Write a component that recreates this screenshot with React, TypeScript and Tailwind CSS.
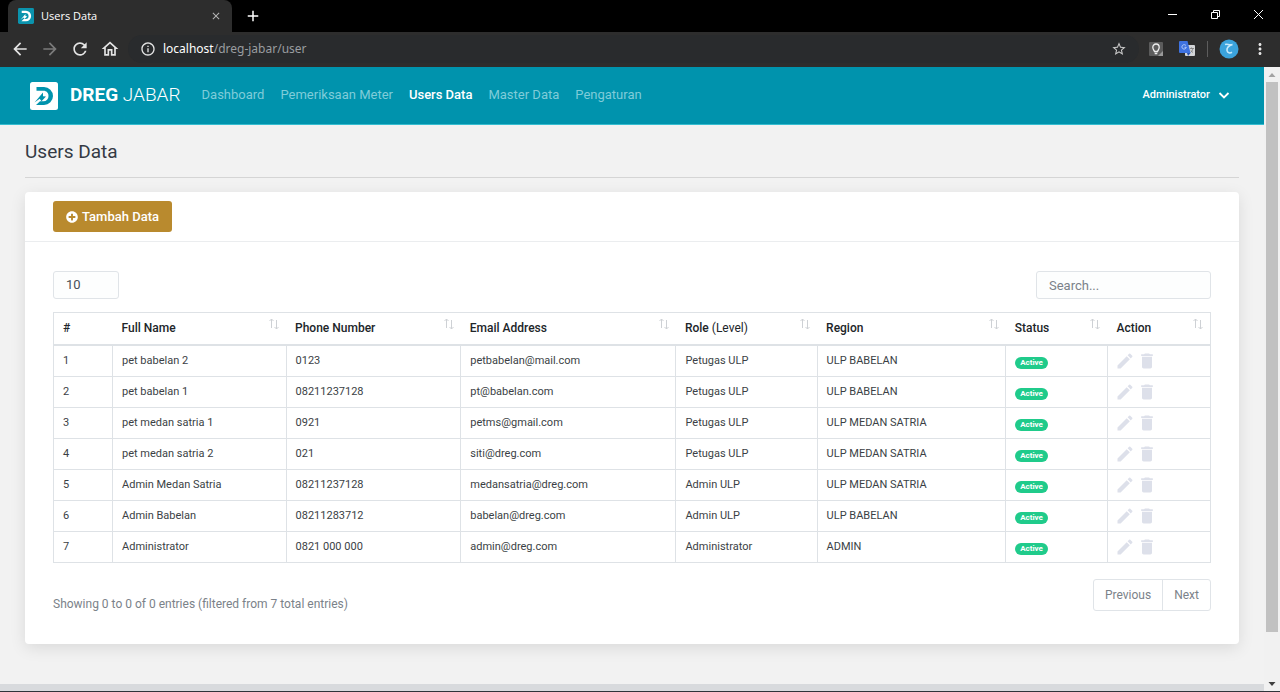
import type { ReactNode } from 'react';
import { FaPlusCircle } from 'react-icons/fa';
import {
  MdAdd,
  MdArrowBack,
  MdArrowForward,
  MdClose,
  MdDelete,
  MdEdit,
  MdInfoOutline,
  MdMoreVert,
  MdOutlineHome,
  MdRefresh,
  MdStarBorder,
} from 'react-icons/md';

interface User {
  name: string;
  phone: string;
  email: string;
  role: string;
  region: string;
}

const users: User[] = [
  { name: 'pet babelan 2', phone: '0123', email: 'petbabelan@mail.com', role: 'Petugas ULP', region: 'ULP BABELAN' },
  { name: 'pet babelan 1', phone: '08211237128', email: 'pt@babelan.com', role: 'Petugas ULP', region: 'ULP BABELAN' },
  { name: 'pet medan satria 1', phone: '0921', email: 'petms@gmail.com', role: 'Petugas ULP', region: 'ULP MEDAN SATRIA' },
  { name: 'pet medan satria 2', phone: '021', email: 'siti@dreg.com', role: 'Petugas ULP', region: 'ULP MEDAN SATRIA' },
  { name: 'Admin Medan Satria', phone: '08211237128', email: 'medansatria@dreg.com', role: 'Admin ULP', region: 'ULP MEDAN SATRIA' },
  { name: 'Admin Babelan', phone: '08211283712', email: 'babelan@dreg.com', role: 'Admin ULP', region: 'ULP BABELAN' },
  { name: 'Administrator', phone: '0821 000 000', email: 'admin@dreg.com', role: 'Administrator', region: 'ADMIN' },
];

const navItems = ['Dashboard', 'Pemeriksaan Meter', 'Users Data', 'Master Data', 'Pengaturan'];

const columns: { label: ReactNode; key: string; width: string; sortable: boolean }[] = [
  { key: 'no', label: '#', width: 'w-[5.1%]', sortable: false },
  { key: 'name', label: 'Full Name', width: 'w-[15%]', sortable: true },
  { key: 'phone', label: 'Phone Number', width: 'w-[15.1%]', sortable: true },
  { key: 'email', label: 'Email Address', width: 'w-[18.6%]', sortable: true },
  { key: 'role', label: <>Role <span className="font-normal">(Level)</span></>, width: 'w-[12.2%]', sortable: true },
  { key: 'region', label: 'Region', width: 'w-[16.3%]', sortable: true },
  { key: 'status', label: 'Status', width: 'w-[8.8%]', sortable: true },
  { key: 'action', label: 'Action', width: 'w-[8.9%]', sortable: true },
];

const Logo = ({ className, bg, fg }: { className: string; bg: string; fg: string }) => (
  <svg viewBox="0 0 28 28" className={className} aria-hidden="true">
    <rect width="28" height="28" rx="2.500" fill={bg} />
    <path d="M6.500 5H14a9 9 0 0 1 0 18H6l4-3.800h3.500a5 5 0 0 0 5-5.200c0-3-2-5.200-5-5.200h-7z" fill={fg} />
    <path d="M4.500 20.500L13 10.500v3.700l3 .2-4.500 4.800-1.800-2.400z" fill={fg} />
  </svg>
);

const SortIcon = () => (
  <svg viewBox="0 0 12 12" className="-mr-1 h-3 w-3 shrink-0" fill="none" stroke="#ced1d5" aria-hidden="true">
    <path d="M3.500 10V1M1.500 3l2-2 2 2M8.500 2v9M6.500 9l2 2 2-2" />
  </svg>
);

const TitleBar = () => (
  <div className="flex h-8 items-end bg-black pl-2 text-white">
    <div className="flex h-8 w-56 items-center rounded-t-lg bg-[#2d2d2d] px-2.5">
      <Logo className="h-4 w-4" bg="#0b93ad" fg="#ffffff" />
      <span className="ml-[7px] flex-1 font-['Open_Sans',sans-serif] text-[11px]">Users Data</span>
      <button type="button" aria-label="Close tab" className="text-[#b5b5b5]">
        <MdClose className="h-3 w-3" />
      </button>
    </div>
    <button type="button" aria-label="New tab" className="ml-3 self-center">
      <MdAdd className="h-[18px] w-[18px]" />
    </button>
    <div className="ml-auto flex h-7 items-center gap-8 self-start pr-4">
      <button type="button" aria-label="Minimize">
        <svg viewBox="0 0 11 11" className="h-[11px] w-[11px]" stroke="white"><path d="M1 5.500h9" /></svg>
      </button>
      <button type="button" aria-label="Restore">
        <svg viewBox="0 0 11 11" className="h-[11px] w-[11px]" stroke="white" fill="none">
          <path d="M1.500 3.500h6v6h-6zM3.500 3.500v-2h6v6h-2" />
        </svg>
      </button>
      <button type="button" aria-label="Close window">
        <svg viewBox="0 0 11 11" className="h-[11px] w-[11px]" stroke="white"><path d="M1 1l9 9M10 1l-9 9" /></svg>
      </button>
    </div>
  </div>
);

const Toolbar = () => (
  <div className="flex h-[35px] items-center bg-[#2d2d2d] pr-[11px] pb-0.5 pl-3 text-[#e4e4e4]">
    <div className="-ml-0.5 flex gap-2.5">
      <button type="button" aria-label="Back"><MdArrowBack className="h-5 w-5" /></button>
      <button type="button" aria-label="Forward" className="text-[#7b7b7b]"><MdArrowForward className="h-5 w-5" /></button>
      <button type="button" aria-label="Reload"><MdRefresh className="h-5 w-5" /></button>
      <button type="button" aria-label="Home"><MdOutlineHome className="h-5 w-5" /></button>
    </div>
    <div className="ml-2 flex h-7 flex-1 items-center rounded-full bg-[#292b2d] px-3">
      <MdInfoOutline className="h-4 w-4" />
      <span className="ml-[7px] flex-1 font-['Noto_Sans',sans-serif] text-xs text-[#9a9da0]">
        <span className="text-white">localhost</span>/dreg-jabar/user
      </span>
      <button type="button" aria-label="Bookmark this page" className="text-[#c8c8c8]"><MdStarBorder className="h-4 w-4" /></button>
    </div>
    <div className="ml-2.5 flex items-center">
      <svg viewBox="0 0 14 14" className="h-3.5 w-3.5" aria-hidden="true">
        <rect width="14" height="14" rx="1" fill="#5c5c5c" />
        <path d="M5.500 9.500C5 8 3.800 7.300 3.800 5.200a3.200 3.200 0 0 1 6.400 0c0 2.100-1.200 2.800-1.700 4.300zM5.700 11.500h2.600" fill="none" stroke="#eee" strokeWidth="1.300" />
        <path d="M14 9v5H9z" fill="#999" />
      </svg>
      <svg viewBox="0 0 16 16" className="ml-4 h-4 w-4" aria-hidden="true">
        <rect x="6" y="4" width="10" height="11" rx="1" fill="#d3d5d8" />
        <path d="M11 7.500h4M12.500 6.500v1M13.800 7.500c-.3 1.800-1 3-2.300 4M12 9.500c.5 1 1 1.500 2 2" fill="none" stroke="#777" strokeWidth=".8" />
        <path d="M1 0h7.500l3 12H1a1 1 0 0 1-1-1V1a1 1 0 0 1 1-1z" fill="#3e72e0" />
        <path d="M7 4.700A2.200 2.200 0 1 0 7.300 6.300H5.500" fill="none" stroke="#b4cbfa" />
        <path d="M8 12h3.500L9 15z" fill="#2850ad" />
      </svg>
      <span className="ml-3 h-4 w-px bg-[#5d5d5d]" />
      <svg viewBox="0 0 20 20" className="ml-[11px] h-5 w-5" aria-hidden="true">
        <circle cx="10" cy="10" r="9.500" fill="#3ba3dc" />
        <path d="M6 5.500c2.500-.8 4 .8 7.500 0C10.500 6.500 7.500 8 8 11.500c.4 2.500 3 3 5 1.800" fill="none" stroke="#c5e9fb" strokeWidth="1.600" />
      </svg>
      <button type="button" aria-label="Browser menu" className="ml-3"><MdMoreVert className="h-[18px] w-[18px]" /></button>
    </div>
  </div>
);

const SiteHeader = () => (
  <header className="flex h-[58px] items-center border-b border-[#35bdd0] bg-[#0093ad] pr-[34px] pl-[30px]">
    <a href="#home" className="flex items-center text-[19px] text-white">
      <Logo className="h-7 w-7" bg="#ffffff" fg="#0093ad" />
      <span className="ml-3 font-light"><b className="font-bold">DREG</b> JABAR</span>
    </a>
    <nav className="ml-[21px] flex gap-4 pb-0.5 text-[13px]">
      {navItems.map((item) => (
        <a
          key={item}
          href={`#${item}`}
          className={item === 'Users Data' ? 'font-medium text-white' : 'text-[#7fccd9]'}
        >
          {item}
        </a>
      ))}
    </nav>
    <button type="button" className="ml-auto flex items-center gap-2 text-[11px] font-medium text-white">
      Administrator
      <svg viewBox="0 0 12 12" className="h-3 w-3" fill="none" stroke="currentColor" strokeWidth="1.800" aria-hidden="true">
        <path d="M1.500 3L6 7.500 10.500 3" />
      </svg>
    </button>
  </header>
);

const UsersTable = () => (
  <table className="mt-[13px] w-full table-fixed border-collapse border border-[#dee2e6] text-[11px] leading-5 text-[#3b3f45]">
    <thead className="text-xs leading-5">
      <tr className="border-b-2 border-[#dee2e6]">
        {columns.map((col) => (
          <th key={col.key} className={`${col.width} pt-[5px] pr-2.5 pb-1.5 pl-[9px] text-left font-medium text-[#212529]`}>
            <div className="flex justify-between whitespace-nowrap">
              <span>{col.label}</span>
              {col.sortable && <SortIcon />}
            </div>
          </th>
        ))}
      </tr>
    </thead>
    <tbody>
      {users.map((user, i) => (
        <tr key={user.email} className="[&>td]:border [&>td]:border-[#dee2e6] [&>td]:px-[9px] [&>td]:py-[5px]">
          <td>{i + 1}</td>
          <td>{user.name}</td>
          <td>{user.phone}</td>
          <td>{user.email}</td>
          <td>{user.role}</td>
          <td>{user.region}</td>
          <td>
            <span className="mt-1 block w-fit rounded-full bg-[#20cb8b] px-[5px] text-[8px] leading-3 font-bold text-white">Active</span>
          </td>
          <td>
            <div className="-ml-0.5 flex gap-0.5 text-[#dde0ea]">
              <button type="button" aria-label={`Edit ${user.name}`}><MdEdit className="h-5 w-5" /></button>
              <button type="button" aria-label={`Delete ${user.name}`}><MdDelete className="h-5 w-5" /></button>
            </div>
          </td>
        </tr>
      ))}
    </tbody>
  </table>
);

const ScrollBar = () => (
  <div className="flex w-4 shrink-0 flex-col items-center bg-[#f1f1f1]" aria-hidden="true">
    <svg viewBox="0 0 16 15" className="h-[15px] w-4" fill="#a3a3a3"><path d="M4.500 10L8 6l3.500 4z" /></svg>
    <div className="w-3 flex-[25] bg-[#c1c1c1]" />
    <div className="flex-[2]" />
    <svg viewBox="0 0 16 15" className="h-[15px] w-4" fill="#404040"><path d="M4.500 6L8 10l3.500-4z" /></svg>
  </div>
);

export default function App() {
  return (
    <div className="flex min-h-screen flex-col bg-[#f2f2f2] font-['Roboto',sans-serif]">
      <TitleBar />
      <Toolbar />
      <div className="flex flex-1">
        <div className="flex min-w-0 flex-1 flex-col">
          <SiteHeader />
          <main className="flex-1 px-[25px] pb-10">
            <h1 className="border-b border-[#d5d5d5] pt-[13px] pb-[11px] text-[19px] leading-7 text-[#343a44]">Users Data</h1>
            <section className="mt-3.5 rounded bg-white shadow-[0_4px_16px_rgba(0,0,0,0.1)]">
              <div className="border-b border-[#ebedef] px-7 py-[9px]">
                <button type="button" className="flex h-[31px] items-center gap-1 rounded-[3px] bg-[#b98a2e] px-[13px] text-[13px] font-medium text-white">
                  <FaPlusCircle className="h-3 w-3" />
                  Tambah Data
                </button>
              </div>
              <div className="px-7 pt-[29px] pb-[30px]">
                <div className="flex justify-between text-[13px] text-[#495057]">
                  <select aria-label="Entries per page" className="h-7 w-[66px] appearance-none rounded-[3px] border border-[#e0e4e8] bg-[#fdfefe] px-3">
                    <option>10</option>
                    <option>25</option>
                    <option>50</option>
                  </select>
                  <input
                    type="search"
                    aria-label="Search users"
                    placeholder="Search..."
                    className="h-7 w-[175px] rounded-[3px] border border-[#e0e4e8] bg-[#fdfefe] px-3 placeholder:text-[#7b8289]"
                  />
                </div>
                <UsersTable />
                <div className="mt-4 flex items-start justify-between text-xs text-[#7b8289]">
                  <p className="mt-[15px] leading-5">Showing 0 to 0 of 0 entries (filtered from 7 total entries)</p>
                  <div className="flex h-8 rounded-[3px] border border-[#e0e4e8]">
                    <button type="button" className="border-r border-[#e0e4e8] px-[11px]">Previous</button>
                    <button type="button" className="px-[11px]">Next</button>
                  </div>
                </div>
              </div>
            </section>
          </main>
          <div className="h-[7px] bg-[#d8dadd]" />
        </div>
        <ScrollBar />
      </div>
      <div className="h-px bg-[#2f3439]" />
    </div>
  );
}
